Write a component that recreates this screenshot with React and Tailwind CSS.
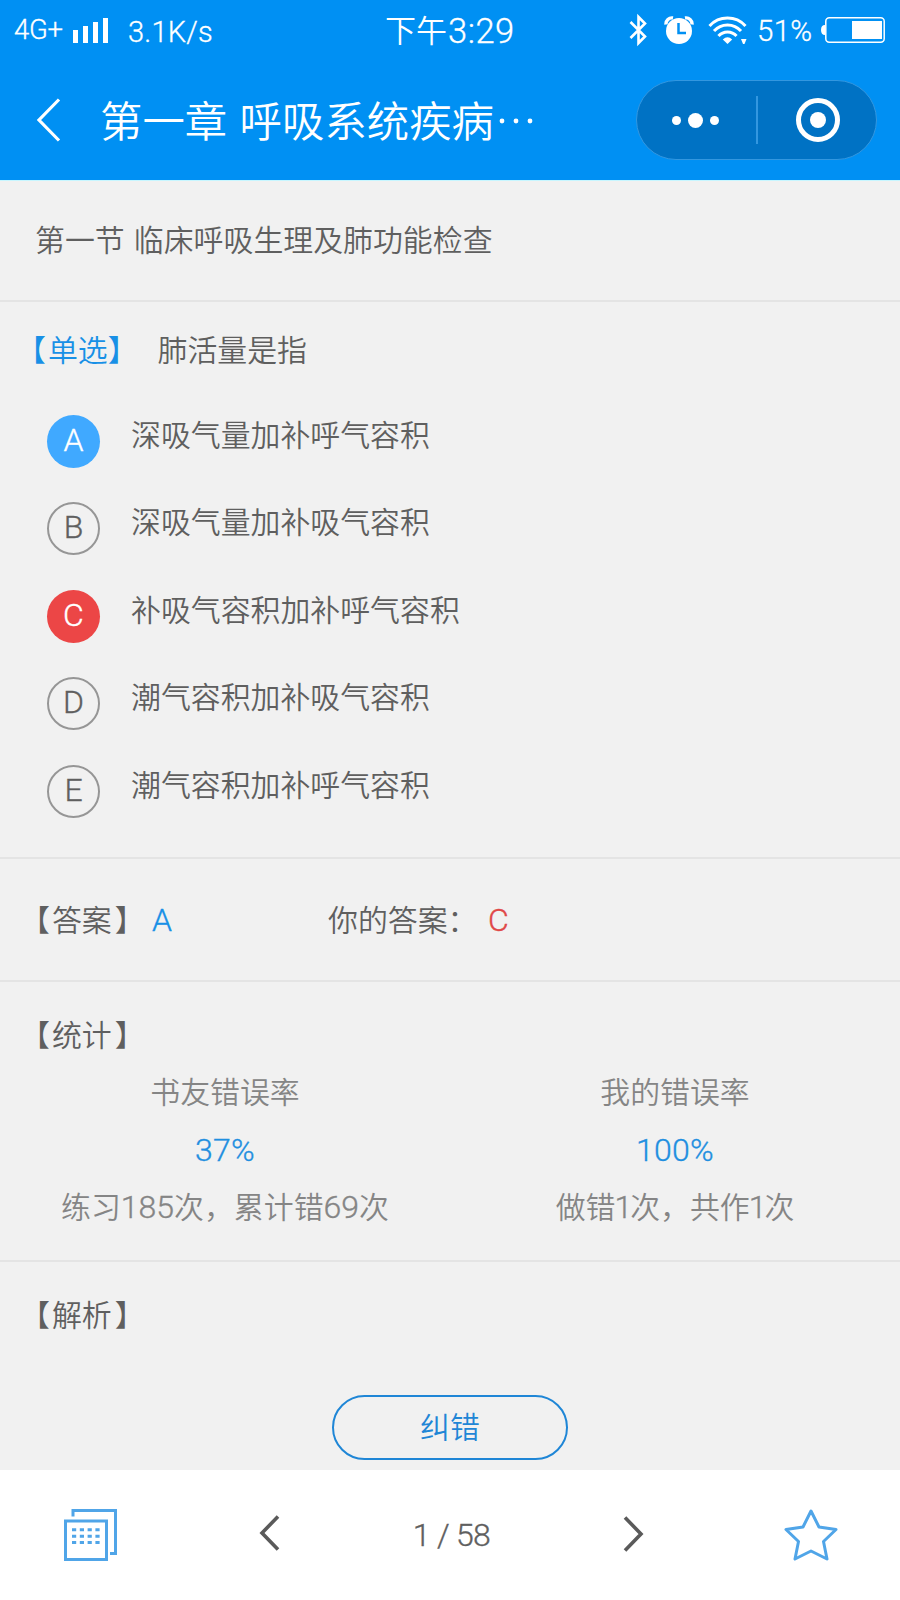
import React, { useState } from 'react';

const options = [
  { key: 'A', text: '深吸气量加补呼气容积' },
  { key: 'B', text: '深吸气量加补吸气容积' },
  { key: 'C', text: '补吸气容积加补呼气容积' },
  { key: 'D', text: '潮气容积加补吸气容积' },
  { key: 'E', text: '潮气容积加补呼气容积' },
];

// Latin letters and digits are a bit larger than the Chinese text
const Latin = ({ children, className = '' }) => (
  <span className={`font-['Roboto'] font-light [-webkit-text-stroke:0.35px] text-[32px] leading-none ${className}`}>{children}</span>
);

const StatusBar = () => (
  <div className="h-[60px] grid grid-cols-[385px_1fr_auto] items-center text-white font-['Roboto',sans-serif]">
    <div className="flex items-center pl-[14px]">
      <span className="w-[59px] text-[27.5px] leading-none tracking-[-0.3px] [-webkit-text-stroke:0.3px]">4G+</span>
      <svg width="36" height="26" viewBox="0 0 36 26" fill="currentColor">
        <rect x="0" y="13" width="5" height="13" />
        <rect x="10" y="9" width="5" height="17" />
        <rect x="20" y="5" width="5" height="21" />
        <rect x="30" y="1" width="5" height="25" />
      </svg>
      <span className="ml-[19px] mt-[4px] text-[29px] leading-none tracking-[0.2px] [-webkit-text-stroke:0.3px]">3.1K/s</span>
    </div>
    <div className="flex items-center leading-none">
      <span className="mb-[3px] font-['Noto_Sans_CJK_SC',sans-serif] text-[31px]">下午</span>
      <span className="ml-px mt-[2px] text-[34.5px] tracking-[0.5px] [-webkit-text-stroke:0.3px]">3:29</span>
    </div>
    <div className="flex items-center pr-[15px]">
      {/* Bluetooth */}
      <svg width="20" height="34" viewBox="0 0 20 34" fill="none" stroke="currentColor" strokeWidth="2.6">
        <path d="M1.5 9 L16 23.5 L9.5 30 V4 L16 10.5 L1.5 25" />
      </svg>
      {/* Alarm */}
      <svg className="ml-[15px]" width="30" height="30" viewBox="0 0 30 30">
        <circle cx="15" cy="16" r="13" fill="currentColor" />
        <path d="M2 9.5 A6 6 0 0 1 9 3" fill="none" stroke="currentColor" strokeWidth="3.4" />
        <path d="M21 3 A6 6 0 0 1 28 9.5" fill="none" stroke="currentColor" strokeWidth="3.4" />
        <path d="M14.5 8 V18 H22" fill="none" stroke="#0090f3" strokeWidth="2.5" />
      </svg>
      {/* Wifi */}
      <svg className="ml-[14px]" width="40" height="30" viewBox="0 0 40 30" fill="none" stroke="currentColor" strokeWidth="3">
        <path d="M1.5 11 A24.5 24.5 0 0 1 37.5 11" />
        <path d="M6 16 A18 18 0 0 1 33 16" />
        <path d="M10.5 21 A12 12 0 0 1 28.5 21" />
        <path d="M14.8 24.5 Q19.5 20 24.2 24.5 L19.5 29 Z" fill="currentColor" stroke="none" />
        <path d="M33 24 H38.5 L36.5 29 H35 Z" fill="currentColor" stroke="none" />
      </svg>
      <span className="ml-[9px] mt-[4px] w-[64px] text-[29.5px] leading-none tracking-[0.3px] [-webkit-text-stroke:0.3px]">51%</span>
      <svg width="64" height="26" viewBox="0 0 64 26">
        <path d="M4 8 Q0 8 0 13 Q0 18 4 18 Z" fill="currentColor" />
        <rect x="4.8" y="0.8" width="58.4" height="24.4" rx="3.5" fill="none" stroke="currentColor" strokeWidth="1.5" />
        <rect x="31" y="4" width="30" height="18" fill="currentColor" />
      </svg>
    </div>
  </div>
);

const NavBar = () => (
  <div className="h-[120px] flex items-center text-white pl-[36px] pr-[23px]">
    <svg width="25" height="44" viewBox="0 0 25 44" fill="none" stroke="currentColor" strokeWidth="3.2">
      <path d="M23 1.5 L3 22 L23 42.5" />
    </svg>
    <h1 className="ml-[39px] flex-1 flex items-center whitespace-nowrap text-[42.4px] leading-none font-[350] [word-spacing:3px]">
      <span className="pb-[2px]">第一章 呼吸系统疾病</span>
      <svg className="ml-[5px] mt-[2px]" width="36" height="6" viewBox="0 0 36 6" fill="currentColor">
        <circle cx="3" cy="3" r="2.4" />
        <circle cx="17" cy="3" r="2.4" />
        <circle cx="31" cy="3" r="2.4" />
      </svg>
    </h1>
    <div className="w-[241px] h-[80px] rounded-full bg-[#0072c4] border border-[#3397e0] flex items-center">
      <div className="w-[119px] flex items-center justify-center gap-[7px] pr-[3px]">
        <span className="w-[9px] h-[9px] rounded-full bg-white" />
        <span className="w-[15px] h-[15px] rounded-full bg-white" />
        <span className="w-[9px] h-[9px] rounded-full bg-white" />
      </div>
      <div className="w-[1.5px] h-[48px] bg-[#3397e0]" />
      <div className="flex-1 flex justify-center pl-[3px]">
        <div className="w-[44px] h-[44px] rounded-full border-[5px] border-white flex items-center justify-center">
          <span className="w-[16px] h-[16px] rounded-full bg-white" />
        </div>
      </div>
    </div>
  </div>
);

const Option = ({ item, answer, picked }) => {
  let style = 'border-[2.5px] border-[#969696] text-[#5f5f5f]';
  if (item.key === answer) style = 'bg-[#40a9ff] text-white';
  else if (item.key === picked) style = 'bg-[#ec4646] text-white';

  return (
    <li className="h-[87.5px] flex items-start">
      <span className={`w-[53px] h-[53px] pb-[3px] rounded-full flex items-center justify-center ${style}`}>
        <Latin>{item.key}</Latin>
      </span>
      <span className="ml-[31px] mt-[2px] leading-[32px]">{item.text}</span>
    </li>
  );
};

// 【答案】, 【统计】, 【解析】
const Label = ({ children }) => (
  <span className="inline-flex w-[130px] pl-[20px] box-content -ml-[20px] whitespace-nowrap">
    <span className="-ml-[2px] mr-[2px]">【</span>
    {children}
    <span className="ml-[3px]">】</span>
  </span>
);

const Stat = ({ title, rate, children }) => (
  <div className="flex flex-col items-center text-[#858585] leading-[57.5px]">
    <p>{title}</p>
    <p className="h-[57.5px] text-[#1f8fe0]"><Latin className="tracking-[0.3px]">{rate}</Latin></p>
    <p className="whitespace-nowrap">{children}</p>
  </div>
);

const App = () => {
  const [page] = useState(1);

  return (
    <div className="w-[900px] h-[1600px] flex flex-col overflow-hidden bg-[#f1f1f1] font-['Noto_Sans_CJK_SC',sans-serif] font-[350] text-[29.9px] text-[#5f5f5f]">
      <header className="h-[181px] bg-[#0090f3] border-b border-[#c7f6ff]">
        <StatusBar />
        <NavBar />
      </header>

      <div className="h-[121px] pl-[35px] pb-[5px] border-b-2 border-[#e4e4e4] flex items-center [word-spacing:2.5px]">第一节 临床呼吸生理及肺功能检查</div>

      {/* Question */}
      <section className="h-[557px] border-b-2 border-[#e4e4e4] pt-[26px]">
        <div className="flex pl-[18px] leading-[40px]">
          <span className="text-[#1890e6]">
            <span className="-ml-[2px] mr-[2px]">【</span>单选】
          </span>
          <span className="ml-[20px]">肺活量是指</span>
        </div>
        <ul className="pl-[47px] mt-[46.7px]">
          {options.map((item) => (
            <Option key={item.key} item={item} answer="A" picked="C" />
          ))}
        </ul>
      </section>

      {/* Answer */}
      <section className="h-[123px] border-b-2 border-[#e4e4e4] flex items-center pl-[22px] pb-[2px]">
        <Label>答案</Label>
        <Latin className="w-[176px] pt-[2px] text-[#1890e6]">A</Latin>
        <span className="w-[160px] whitespace-nowrap">你的答案：</span>
        <Latin className="pt-[2px] text-[#e04848]">C</Latin>
      </section>

      {/* Statistics */}
      <section className="h-[280px] border-b-2 border-[#e4e4e4] pt-[31px]">
        <h2 className="pl-[22px] leading-[40px] font-[350] flex"><Label>统计</Label></h2>
        <div className="grid grid-cols-2 mt-[9px]">
          <Stat title="书友错误率" rate="37%">
            练习<Latin>185</Latin>次，累计错<Latin>69</Latin>次
          </Stat>
          <Stat title="我的错误率" rate="100%">
            做错<Latin className="tracking-[-3px] mr-px -ml-px">1</Latin>次，共作<Latin className="tracking-[-3px] mr-px -ml-px">1</Latin>次
          </Stat>
        </div>
      </section>

      {/* Analysis */}
      <section className="flex-1 pt-[31px] flex flex-col">
        <h2 className="pl-[22px] leading-[40px] font-[350] flex"><Label>解析</Label></h2>
        <button className="mt-[62px] w-[236px] h-[65px] pb-[3px] self-center rounded-full border-2 border-[#1f86d6] text-[#1f86d6] leading-none">
          纠错
        </button>
      </section>

      <footer className="h-[130px] shrink-0 bg-white flex items-center pl-[64px] pr-[62px]">
        <svg width="53" height="52" viewBox="0 0 53 52" fill="none" stroke="#50a5e8" strokeWidth="3">
          <path d="M9 7.5 V1.5 H51.5 V44.5 H46" />
          <rect x="1.5" y="12" width="41" height="38.5" />
          <path d="M8 20.8 H36 M8 27.2 H36 M8 33.6 H36" strokeDasharray="4.2 3.6" />
        </svg>
        <svg className="ml-[142px] mb-[4px]" width="21" height="36" viewBox="0 0 21 36" fill="none" stroke="#5a5a5a" strokeWidth="3.6">
          <path d="M19 1.5 L3 18 L19 34.5" />
        </svg>
        <span className="w-[343px] text-center leading-none"><Latin className="tracking-[-0.7px]">{page} / 58</Latin></span>
        <svg className="mb-[2px]" width="21" height="36" viewBox="0 0 21 36" fill="none" stroke="#5a5a5a" strokeWidth="3.6">
          <path d="M2 1.5 L18 18 L2 34.5" />
        </svg>
        <svg className="ml-auto" width="54" height="52" viewBox="0 0 54 52" fill="none" stroke="#50a5e8" strokeWidth="3" strokeLinejoin="round">
          <path d="M27 2 L35 18 L52 20.5 L39.5 32.5 L43 50 L27 42 L11 50 L14.5 32.5 L2 20.5 L19 18 Z" />
        </svg>
      </footer>
    </div>
  );
};

export default App;
